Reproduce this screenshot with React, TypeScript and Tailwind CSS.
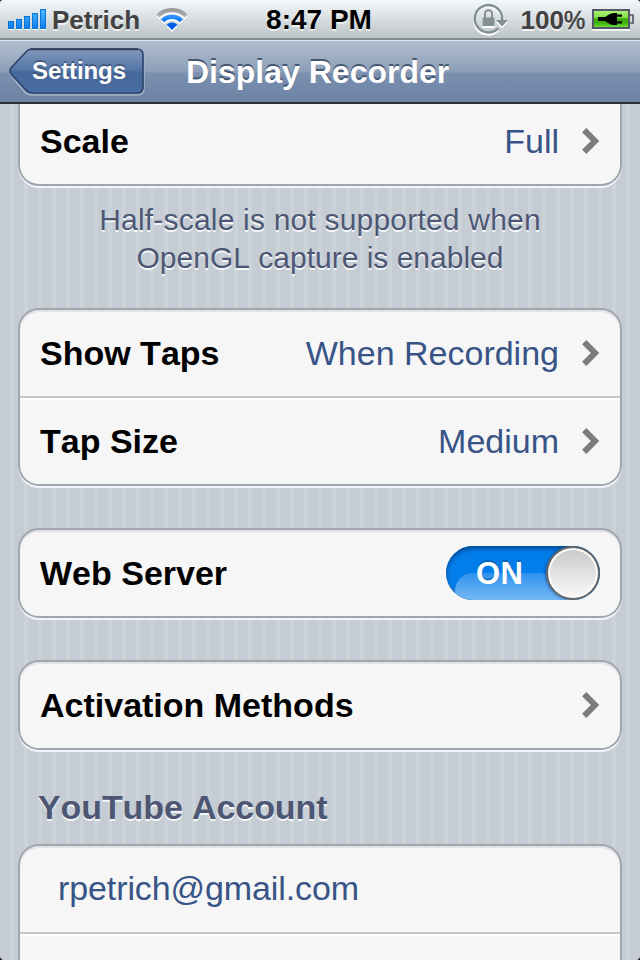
import type { ReactNode } from 'react';

function Chevron() {
  return (
    <svg className="ml-[22px] block h-[28px] w-[20px] shrink-0" viewBox="0 0 20 28">
      <path d="M3.2 3.2 L14 14 L3.2 24.8" fill="none" stroke="#7c7c7c" strokeWidth="6" />
    </svg>
  );
}

function Label({ children }: { children: ReactNode }) {
  return <span className="text-[34px] leading-[40px] font-bold whitespace-nowrap text-black">{children}</span>;
}

function Value({ children }: { children: ReactNode }) {
  return <span className="ml-auto text-[34px] leading-[40px] whitespace-nowrap text-[#385487]">{children}</span>;
}

function Row({ children, className }: { children: ReactNode; className: string }) {
  return <div className={`flex shrink-0 items-center ${className}`}>{children}</div>;
}

function Card({ children, className }: { children: ReactNode; className: string }) {
  return (
    <section className={`mx-[18px] flex shrink-0 flex-col border-2 border-[#a0a6b0] bg-[#f6f6f6] ${className}`}>
      {children}
    </section>
  );
}

const groupStyle = 'rounded-[21px] shadow-[0_2px_0_#f2f5f8,inset_0_2px_1px_#e2e2e3]';

function StatusBar() {
  return (
    <header className="relative flex h-10 shrink-0 items-center border-b-2 border-[#808c8a] bg-linear-to-b from-[#f3f8fb] to-[#bdc4c6]">
      <svg className="ml-2 block h-[22px] w-[40px]" viewBox="0 0 40 22">
        <defs>
          <linearGradient id="bars" x1="0" y1="0" x2="0" y2="22" gradientUnits="userSpaceOnUse">
            <stop offset="0" stopColor="#51c0ff" />
            <stop offset="1" stopColor="#0877ed" />
          </linearGradient>
        </defs>
        {[[0, 13], [8, 11], [16, 8], [24, 5], [32, 1]].map(([x, y]) => (
          <g key={x}>
            <rect x={x} y={y + 2} width="6" height={20 - y} fill="#fff" />
            <rect x={x + 0.5} y={y + 0.5} width="5" height={20 - y} fill="url(#bars)" stroke="#0876d7" />
          </g>
        ))}
      </svg>
      <span className="mt-[2px] ml-1 text-[26px] leading-[30px] font-bold text-[#414141] [text-shadow:0_2px_0_#ffffffb0]">Petrich</span>
      <svg className="mt-[2px] ml-[15px] block h-[26px] w-[34px]" viewBox="0 0 34 26">
        <defs>
          <linearGradient id="wifi" x1="0" y1="10" x2="0" y2="23" gradientUnits="userSpaceOnUse">
            <stop offset="0" stopColor="#2a93ff" />
            <stop offset="0.4" stopColor="#005fe8" />
            <stop offset="1" stopColor="#0058ec" />
          </linearGradient>
          <linearGradient id="wifiOuter" x1="0" y1="0" x2="0" y2="10" gradientUnits="userSpaceOnUse">
            <stop offset="0" stopColor="#8f9092" />
            <stop offset="1" stopColor="#b2b3b5" />
          </linearGradient>
        </defs>
        <g fill="none" stroke="#fff" strokeWidth="4.2" transform="translate(0 1.8)">
          <path d="M2.9 8.9 A20 20 0 0 1 31.1 8.9" />
          <path d="M7.7 13.7 A13.2 13.2 0 0 1 26.3 13.7" />
        </g>
        <path d="M11.7 19.5 A7.5 7.5 0 0 1 22.3 19.5 L17 25Z" fill="#fff" />
        <path d="M2.9 8.9 A20 20 0 0 1 31.1 8.9" fill="none" stroke="url(#wifiOuter)" strokeWidth="4.2" />
        <path d="M7.7 13.7 A13.2 13.2 0 0 1 26.3 13.7" fill="none" stroke="url(#wifi)" strokeWidth="4.4" />
        <path d="M11.7 17.7 A7.5 7.5 0 0 1 22.3 17.7 L17 23Z" fill="url(#wifi)" />
      </svg>
      <span className="absolute top-1 right-0.5 left-0 text-center text-[28px] leading-8 font-bold text-black [text-shadow:0_2px_0_#ffffffa0]">
        8:47 PM
      </span>
      <svg className="ml-auto block h-[34px] w-[36px]" viewBox="0 0 36 34">
        <path d="M26.4 28.2 A14 14 0 1 1 30 16" fill="none" stroke="#fff" strokeWidth="2.2" />
        <path d="M26.4 26.2 A13.7 13.7 0 1 1 30 14.5 V18" fill="none" stroke="#829090" strokeWidth="2.4" />
        <path d="M24 20 H36 L30 26.5Z" fill="#fff" />
        <path d="M24 18 H36 L30 24.5Z" fill="#829090" />
        <rect x="10.5" y="16" width="12" height="10" fill="#fff" />
        <rect x="10.5" y="15.5" width="12" height="8.5" rx="0.5" fill="#829090" />
        <path d="M13 16 V11.8 A3.5 3.5 0 0 1 20 11.8 V16" fill="none" stroke="#829090" strokeWidth="2" />
      </svg>
      <span className="mt-[2px] ml-[13px] flex text-[26px] leading-[30px] text-[#414141] [text-shadow:0_2px_0_#ffffffb0]">
        <b className="font-bold">100</b>
        <span className="w-[21px] origin-left scale-x-92 [-webkit-text-stroke:0.6px_#414141]">%</span>
      </span>
      <svg className="mt-[2px] mr-[6px] ml-[7px] block h-[22px] w-[42px]" viewBox="0 0 42 22">
        <defs>
          <linearGradient id="battery" x1="0" y1="0" x2="0" y2="1">
            <stop offset="0" stopColor="#b3f47c" />
            <stop offset="0.4" stopColor="#84e048" />
            <stop offset="0.5" stopColor="#37a606" />
            <stop offset="0.75" stopColor="#43b50e" />
            <stop offset="1" stopColor="#79ec44" />
          </linearGradient>
        </defs>
        <rect x="0" y="2" width="38" height="20" fill="#fff" opacity="0.8" />
        <rect x="1" y="1" width="36" height="18" fill="url(#battery)" stroke="#555869" strokeWidth="2" />
        <path d="M38 6 H41 V14 H38" fill="#d9dadd" stroke="#555869" strokeWidth="1.7" />
        <path d="M6 8 H13 L17 5.5 Q19 4 22 4 H25 V5.5 H30 V7.8 H25 V12.2 H30 V14.5 H25 V16 H22 Q19 16 17 14.5 L13 12 H6Z" fill="#000" />
      </svg>
    </header>
  );
}

function NavBar() {
  return (
    <nav className="relative flex h-16 shrink-0 items-start border-t border-b-2 border-t-[#dce2e9] border-b-[#2b2e34] bg-[linear-gradient(#b3bfce_0px,#8b9db8_31px,#7b90af_32px,#6d83a4_61px)]">
      <div className="relative mt-[7px] ml-2 h-[48px] w-[137px]">
        <svg className="absolute inset-0 block h-full w-full" viewBox="0 0 137 48">
          <defs>
            <linearGradient id="back" x1="0" y1="0" x2="0" y2="1">
              <stop offset="0" stopColor="#8399bc" />
              <stop offset="0.5" stopColor="#5174a7" />
              <stop offset="0.52" stopColor="#456899" />
              <stop offset="1" stopColor="#4a6da3" />
            </linearGradient>
          </defs>
          <path d="M21 1 H129 Q136 1 136 8 V40 Q136 47 129 47 H24 Q19 47 16 43 L1 25" fill="none" stroke="#a6b4c8" strokeWidth="1.5" />
          <path d="M25 1 H129 Q135 1 135 7 V39 Q135 45 129 45 H25 Q20 45 17 41 L3 26 Q1 23 3 20 L17 5 Q20 1 25 1Z" fill="url(#back)" stroke="#2e466e" strokeWidth="1.7" />
          <path d="M22 1.3 H130" stroke="#30405d" strokeWidth="2" />
        </svg>
        <span className="relative block pl-6 text-[24px] leading-[46px] font-bold tracking-[-0.1px] text-white [text-shadow:0_-2px_0_#344b6cb0]">Settings</span>
      </div>
      <h1 className="absolute top-[11px] left-[186px] text-[32px] leading-[40px] font-bold whitespace-nowrap text-white [text-shadow:0_-2px_0_#465771]">
        Display Recorder
      </h1>
    </nav>
  );
}

function Toggle() {
  return (
    <div className="relative ml-auto flex h-[54px] w-[154px] items-center overflow-hidden rounded-full bg-[#037de9] shadow-[inset_0_3px_4px_#004d97,inset_0_-1px_1px_#567ba3]">
      <div className="absolute top-[27px] left-[9px] h-[27px] w-[140px] rounded-tl-[18px] bg-linear-to-b from-[#2b91ed] to-[#74b8f5]" />
      <span className="relative mt-[2px] ml-[30px] text-[31px] leading-9 font-bold tracking-[0.5px] text-white [text-shadow:0_-2px_0_#075ba3a0]">ON</span>
      <div className="absolute top-0 right-0 h-[54px] w-[54px] rounded-full border-2 border-[#656565] bg-linear-to-b from-[#c9c9c9] to-[#fafafa] shadow-[-1px_0_3px_#003a7a90,inset_0_0_0_2px_#fcfcfc]" />
    </div>
  );
}

export default function App() {
  return (
    <div className="relative flex h-[960px] w-[640px] flex-col overflow-hidden bg-[#c5ccd4] font-['Liberation_Sans',Arial,sans-serif] [font-kerning:none]">
      <StatusBar />
      <NavBar />
      <main className="flex min-h-0 flex-1 flex-col overflow-hidden bg-[repeating-linear-gradient(90deg,#c5ccd4_0px,#c5ccd4_10px,#cbd2d8_10px,#cbd2d8_14px)]">
        <Card className="rounded-b-[21px] border-t-0 shadow-[0_2px_0_#f2f5f8]">
          <Row className="h-[80px] pr-[19px] pb-[6px] pl-5">
            <Label>Scale</Label>
            <Value>Full</Value>
            <Chevron />
          </Row>
        </Card>
        <p className="mt-[15px] shrink-0 text-center text-[30px] leading-[38px] tracking-[0.2px] text-[#4d5774] [text-shadow:0_2px_0_#ffffffd0]">
          Half-scale is not supported when
          <br />
          <span className="tracking-normal">OpenGL capture is enabled</span>
        </p>
        <Card className={`mt-[31px] ${groupStyle}`}>
          <Row className="h-[86px] pr-[19px] pl-5">
            <Label>Show Taps</Label>
            <Value>When Recording</Value>
            <Chevron />
          </Row>
          <Row className="h-[88px] border-t-2 border-[#c5c5c6] pr-[19px] pl-5 shadow-[inset_0_2px_0_#fff]">
            <Label>Tap Size</Label>
            <Value>Medium</Value>
            <Chevron />
          </Row>
        </Card>
        <Card className={`mt-[42px] h-[90px] ${groupStyle}`}>
          <Row className="h-[86px] pr-5 pl-5">
            <Label>Web Server</Label>
            <Toggle />
          </Row>
        </Card>
        <Card className={`mt-[42px] h-[90px] ${groupStyle}`}>
          <Row className="h-[86px] justify-between pr-[19px] pl-5">
            <Label>Activation Methods</Label>
            <Chevron />
          </Row>
        </Card>
        <h2 className="mt-[37px] ml-[38px] h-[57px] shrink-0 text-[34px] leading-10 font-bold tracking-[-0.1px] text-[#4d5774] [text-shadow:0_2px_0_#ffffffd0]">
          YouTube Account
        </h2>
        <Card className="h-[140px] rounded-t-[21px] border-b-0 shadow-[inset_0_2px_1px_#e2e2e3]">
          <Row className="h-[84px] pl-[38px]">
            <span className="text-[34px] leading-10 tracking-[-0.1px] text-[#385487]">rpetrich@gmail.com</span>
          </Row>
          <div className="mt-[2px] h-1 border-t-2 border-[#c5c5c6] bg-white" />
        </Card>
      </main>
      <svg className="absolute inset-0 h-full w-full" viewBox="0 0 640 960">
        <path d="M0 0H3Q0 0 0 3ZM640 0H637Q640 0 640 3ZM0 960H3Q1 960 0 957ZM640 960H637Q639 960 640 957Z" fill="#111" />
      </svg>
    </div>
  );
}
